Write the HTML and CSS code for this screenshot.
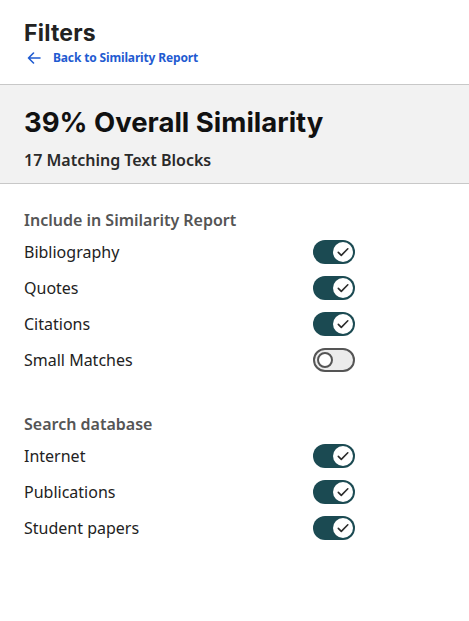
FILE: index.html
```html
<!DOCTYPE html>
<html>
<head>
<meta charset="utf-8">
<link rel="stylesheet" href="styles.css">
</head>
<body>
<header class="top">
  <h1 class="title">Filters</h1>
  <a class="back" href="#">
    <svg class="arrow" width="14" height="12" viewBox="0 0 14 12"><path d="M13 6H1.5M6.5 1L1.5 6l5 5" fill="none" stroke="#1f5bd1" stroke-width="1.6" stroke-linecap="round" stroke-linejoin="round"/></svg>
    <span>Back to Similarity Report</span>
  </a>
</header>
<section class="summary">
  <h2 class="overall">39% Overall Similarity</h2>
  <p class="blocks">17 Matching Text Blocks</p>
</section>
<section class="group">
  <h3 class="group-title">Include in Similarity Report</h3>
  <div class="row"><span>Bibliography</span><span class="toggle on"><span class="knob"><svg viewBox="0 0 14 14" width="14" height="14"><path d="M2.3 7.4l3 3L11.8 3.8" fill="none" stroke="#2b2b2b" stroke-width="1.6" stroke-linecap="round" stroke-linejoin="round"/></svg></span></span></div>
  <div class="row"><span>Quotes</span><span class="toggle on"><span class="knob"><svg viewBox="0 0 14 14" width="14" height="14"><path d="M2.3 7.4l3 3L11.8 3.8" fill="none" stroke="#2b2b2b" stroke-width="1.6" stroke-linecap="round" stroke-linejoin="round"/></svg></span></span></div>
  <div class="row"><span>Citations</span><span class="toggle on"><span class="knob"><svg viewBox="0 0 14 14" width="14" height="14"><path d="M2.3 7.4l3 3L11.8 3.8" fill="none" stroke="#2b2b2b" stroke-width="1.6" stroke-linecap="round" stroke-linejoin="round"/></svg></span></span></div>
  <div class="row"><span>Small Matches</span><span class="toggle off"><span class="knob"></span></span></div>
</section>
<section class="group">
  <h3 class="group-title">Search database</h3>
  <div class="row"><span>Internet</span><span class="toggle on"><span class="knob"><svg viewBox="0 0 14 14" width="14" height="14"><path d="M2.3 7.4l3 3L11.8 3.8" fill="none" stroke="#2b2b2b" stroke-width="1.6" stroke-linecap="round" stroke-linejoin="round"/></svg></span></span></div>
  <div class="row"><span>Publications</span><span class="toggle on"><span class="knob"><svg viewBox="0 0 14 14" width="14" height="14"><path d="M2.3 7.4l3 3L11.8 3.8" fill="none" stroke="#2b2b2b" stroke-width="1.6" stroke-linecap="round" stroke-linejoin="round"/></svg></span></span></div>
  <div class="row"><span>Student papers</span><span class="toggle on"><span class="knob"><svg viewBox="0 0 14 14" width="14" height="14"><path d="M2.3 7.4l3 3L11.8 3.8" fill="none" stroke="#2b2b2b" stroke-width="1.6" stroke-linecap="round" stroke-linejoin="round"/></svg></span></span></div>
</section>
</body>
</html>
```
FILE: styles.css
```css
* { box-sizing: border-box; }
body {
  margin: 0;
  background: #fff;
  font-family: "Noto Sans", "Open Sans", sans-serif;
  color: #222;
  width: 469px;
}
.top {
  padding: 19px 24px 0;
  height: 84px;
}
.title {
  margin: 0;
  font-family: Inter, "Noto Sans", sans-serif;
  font-weight: 700;
  font-size: 23px;
  line-height: 28px;
  color: #222;
  letter-spacing: 0.2px;
}
.back {
  display: flex;
  align-items: center;
  gap: 12px;
  margin-top: 1px;
  margin-left: 3px;
  text-decoration: none;
  color: #1f5bd1;
  font-weight: 700;
  font-size: 12px;
  line-height: 20px;
  letter-spacing: -0.15px;
}
.summary {
  background: #f2f2f2;
  border-top: 1px solid #c8c8c8;
  border-bottom: 1px solid #c8c8c8;
  padding: 19px 24px 0;
  height: 100px;
}
.overall {
  margin: 0;
  font-family: Inter, "Noto Sans", sans-serif;
  font-weight: 700;
  font-size: 27.5px;
  line-height: 36px;
  color: #111;
  letter-spacing: 0;
}
.blocks {
  margin: 9px 0 0;
  font-size: 16px;
  font-weight: 600;
  line-height: 22px;
  color: #2a2a2a;
}
.group {
  padding: 0 0 0 24px;
  width: 355px;
  box-sizing: content-box;
}
.summary + .group { margin-top: 24px; }
.group + .group { margin-top: 34px; }
.group-title {
  margin: 0 0 2px;
  font-size: 16px;
  font-weight: 600;
  color: #555;
  line-height: 24px;
}
.row {
  display: flex;
  justify-content: space-between;
  align-items: center;
  width: 331px;
  height: 36px;
  font-size: 16px;
  line-height: 24px;
}
.toggle {
  width: 42px;
  height: 24px;
  border-radius: 12px;
  display: flex;
  align-items: center;
  padding: 0 3px;
}
.toggle.on {
  background: #1b4a52;
  justify-content: flex-end;
}
.toggle.off {
  background: #ececec;
  border: 2px solid #555;
  justify-content: flex-start;
  padding: 0 2px;
}
.knob {
  width: 20px;
  height: 20px;
  border-radius: 50%;
  background: #fff;
  display: flex;
  align-items: center;
  justify-content: center;
}
.toggle.on .knob { margin-right: -1px; }
.toggle.off .knob {
  width: 16px;
  height: 16px;
  border: 2px solid #555;
}
```
